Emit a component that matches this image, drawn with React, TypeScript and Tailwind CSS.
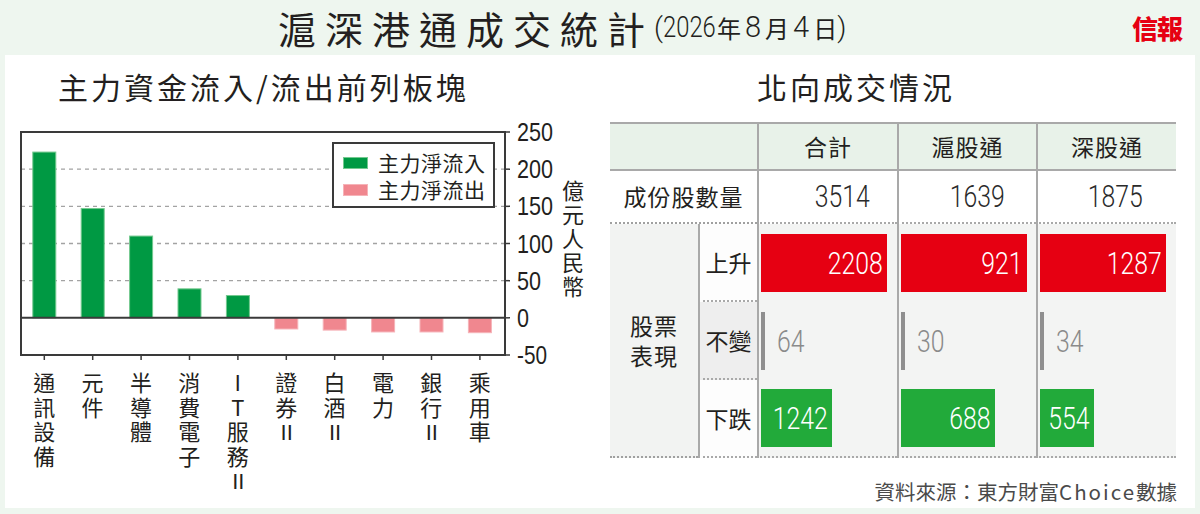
import React from 'react';

const CJK = "font-['Noto_Sans_CJK_TC',sans-serif]";
const LAT = "font-['Liberation_Sans',sans-serif]";
const NUM = "font-['Roboto','Liberation_Sans',sans-serif] font-light";

type Sector = { label: string[]; v: number };

// 'II' parts are set horizontally inside the vertical label
const sectors: Sector[] = [
  { label: ['通訊設備'], v: 223 },
  { label: ['元件'], v: 147 },
  { label: ['半導體'], v: 110 },
  { label: ['消費電子'], v: 39 },
  { label: ['IT服務', 'II'], v: 30 },
  { label: ['證券', 'II'], v: -15 },
  { label: ['白酒', 'II'], v: -16.5 },
  { label: ['電力'], v: -19 },
  { label: ['銀行', 'II'], v: -19 },
  { label: ['乘用車'], v: -20 },
];

// chart scale: 250 at y=12, -50 at y=235
const Y0 = 12;
const K = 223 / 300;
const yOf = (v: number) => Y0 + (250 - v) * K;
const cx = (i: number) => 24.3 + 48.4 * i;

const Chart: React.FC = () => (
  <svg width={541} height={250} className="block overflow-visible">
    {[200, 150, 100, 50].map((v) => (
      <line key={v} x1={1} x2={485} y1={yOf(v)} y2={yOf(v)} stroke="#a3a3a3" strokeWidth={1.3} strokeDasharray="4 4" />
    ))}
    {sectors.map((s, i) => {
      const h = Math.abs(s.v) * K;
      const pos = s.v > 0;
      return (
        <rect
          key={i}
          x={cx(i) - 11.5}
          y={pos ? yOf(s.v) : yOf(0)}
          width={23}
          height={h}
          fill={pos ? '#009943' : '#f0878f'}
          stroke={pos ? '#74c98f' : '#f6b3b8'}
          strokeWidth={1}
        />
      );
    })}
    <rect x={1} y={Y0} width={484} height={223} fill="none" stroke="#3a3a3a" strokeWidth={2} />
    <line x1={1} x2={485} y1={yOf(0)} y2={yOf(0)} stroke="#3a3a3a" strokeWidth={2} />
    {[250, 200, 150, 100, 50, 0, -50].map((v) => {
      const s = String(v);
      return (
        <g key={v}>
          <line x1={485} x2={490} y1={yOf(v)} y2={yOf(v)} stroke="#3a3a3a" strokeWidth={1.5} />
          <text
            x={497}
            y={yOf(v)}
            dominantBaseline="central"
            textLength={v < 0 ? 30 : s.length * 12}
            lengthAdjust="spacingAndGlyphs"
            className={`${LAT} fill-[#231f20] text-[25px]`}
          >
            {s}
          </text>
        </g>
      );
    })}
    {sectors.map((_, i) => (
      <line key={i} x1={cx(i)} x2={cx(i)} y1={235} y2={240} stroke="#3a3a3a" strokeWidth={1.5} />
    ))}
  </svg>
);

const Legend: React.FC = () => (
  <div className="absolute left-[312px] top-[22px] flex h-[66px] w-[163px] items-center gap-[10px] border-2 border-[#3a3a3a] bg-white pl-[9px] pt-[2px]">
    <div className="flex flex-col gap-[15px]">
      <span className="block h-[12px] w-[25px] border border-[#74c98f] bg-[#009943]" />
      <span className="block h-[12px] w-[25px] border border-[#f6b3b8] bg-[#f0878f]" />
    </div>
    <p className="text-[21px] leading-[27px] tracking-[0.5px] text-[#231f20]">
      主力淨流入
      <br />
      主力淨流出
    </p>
  </div>
);

// condensed light figures
const Num: React.FC<{ v: number; left?: boolean }> = ({ v, left }) => (
  <span className={`inline-block ${left ? 'origin-left' : 'origin-right'} scale-x-[0.8] ${NUM} text-[31px] leading-none`}>{v}</span>
);

type Col = { name: string; total: number; up: number; flat: number; down: number; pr: string };

const cols: Col[] = [
  { name: '合計', total: 3514, up: 2208, flat: 64, down: 1242, pr: 'pr-[27px]' },
  { name: '滬股通', total: 1639, up: 921, flat: 30, down: 688, pr: 'pr-[31px]' },
  { name: '深股通', total: 1875, up: 1287, flat: 34, down: 554, pr: 'pr-[33px]' },
];

const BAR = 126;

const Table: React.FC = () => (
  <div className="grid w-[566px] grid-cols-[88px_59px_140px_139px_140px] grid-rows-[49px_53px_78px_78px_78px] text-[#231f20]">
    <div className="col-span-2 border-y-2 border-[#a9a9a9] bg-[#e8f2e9]" />
    {cols.map((c) => (
      <div
        key={c.name}
        className="flex items-center justify-center border-y-2 border-l-2 border-[#a9a9a9] bg-[#e8f2e9] text-[23px] tracking-[1px]"
      >
        {c.name}
      </div>
    ))}

    <div className="col-span-2 flex items-center justify-center border-b-2 border-dotted border-[#a0a0a0] text-[23px] tracking-[1px]">
      成份股數量
    </div>
    {cols.map((c) => (
      <div
        key={c.name}
        className={`flex items-center justify-end border-b-2 border-l-2 border-[#a9a9a9] [border-bottom-style:dotted] ${c.pr} text-[#2a2a2a]`}
      >
        <Num v={c.total} />
      </div>
    ))}

    <div className="row-span-3 flex items-center justify-center border-b-2 border-dotted border-[#a0a0a0] bg-[#f2f3f2]">
      <p className="text-center text-[23px] leading-[30px] tracking-[1px]">
        股票
        <br />
        表現
      </p>
    </div>

    <div className="flex items-center justify-center border-b-2 border-l-2 border-[#a9a9a9] bg-[#fdfdfd] [border-bottom-style:dotted] text-[23px]">
      上升
    </div>
    {cols.map((c) => (
      <div key={c.name} className="flex items-center border-l-2 border-[#a9a9a9] bg-[#f3f4f3] pl-[2px]">
        <div className="flex h-[58px] items-center justify-end bg-[#e60012] pr-[4px] text-white" style={{ width: BAR }}>
          <Num v={c.up} />
        </div>
      </div>
    ))}

    <div className="flex items-center justify-center border-b-2 border-l-2 border-[#a9a9a9] bg-[#eeeeee] [border-bottom-style:dotted] text-[23px]">
      不變
    </div>
    {cols.map((c) => (
      <div key={c.name} className="flex items-center gap-[12px] border-l-2 border-[#a9a9a9] bg-[#f3f4f3] pl-[2px]">
        <div className="h-[58px] w-[4px] bg-[#8f8f8f]" />
        <span className="text-[#8a8a8a]">
          <Num v={c.flat} left />
        </span>
      </div>
    ))}

    <div className="flex items-center justify-center border-b-2 border-l-2 border-[#a9a9a9] bg-[#fdfdfd] [border-bottom-style:dotted] text-[23px]">
      下跌
    </div>
    {cols.map((c) => (
      <div
        key={c.name}
        className="flex items-center border-b-2 border-l-2 border-[#a9a9a9] bg-[#f3f4f3] pl-[2px] [border-bottom-style:dotted]"
      >
        <div
          className="flex h-[58px] items-center justify-end bg-[#22aa3a] pr-[4px] text-white"
          style={{ width: Math.round((c.down / c.up) * BAR) }}
        >
          <Num v={c.down} />
        </div>
      </div>
    ))}
  </div>
);

export default function App() {
  return (
    <div className={`flex h-[514px] w-[1200px] flex-col overflow-hidden bg-[#eef6ef] ${CJK} text-[#231f20]`}>
      <header className="flex h-[55px] shrink-0 items-center pl-[278px] pr-[18px]">
        <h1 className="text-[38px] font-normal leading-none tracking-[9px]">滬深港通成交統計</h1>
        <span className="flex items-center text-[24px] leading-none">
          <span className={`${NUM} text-[28px]`}>(</span>
          <span className={`inline-block w-[52px] origin-left scale-x-[0.82] ${NUM} text-[29px]`}>2026</span>
          <span className="ml-[2px]">年</span>
          <span className={`mx-[4px] ${NUM} text-[29px]`}>8</span>
          <span>月</span>
          <span className={`mx-[4px] ${NUM} text-[29px]`}>4</span>
          <span>日</span>
          <span className={`${NUM} text-[28px]`}>)</span>
        </span>
        <span className="ml-auto text-[26px] font-black leading-none tracking-[-1px] text-[#e60012]">信報</span>
      </header>

      <main className="mx-[5px] flex h-[453px] shrink-0 bg-white">
        <section className="flex w-[595px] flex-col">
          <h2 className="h-[51px] pl-[53px] pt-[11px] text-[30px] leading-[40px] tracking-[3px]">主力資金流入/流出前列板塊</h2>
          <div className="mt-[14px] flex pl-[15px]">
            <div className="relative">
              <Chart />
              <Legend />
            </div>
            <div className="mt-[60px] flex w-[24px] justify-center">
              <span className="text-[22px] leading-[24px] tracking-[2px] [writing-mode:vertical-rl]">億元人民幣</span>
            </div>
          </div>
          <div className="flex pl-[15px] pt-[2px]">
            {sectors.map((s, i) => (
              <div key={i} className="flex w-[48.4px] justify-center">
                <span className="text-[22px] leading-[24px] tracking-[2.5px] [text-orientation:upright] [writing-mode:vertical-rl]">
                  {s.label.map((part, j) =>
                    part === 'II' ? (
                      <span key={j} className={`${LAT} tracking-[3px] [text-combine-upright:all]`}>
                        {part}
                      </span>
                    ) : (
                      <span key={j}>{part}</span>
                    ),
                  )}
                </span>
              </div>
            ))}
          </div>
        </section>

        <section className="flex flex-1 flex-col pl-[10px]">
          <h2 className="h-[51px] pl-[147px] pt-[11px] text-[30px] leading-[40px] tracking-[3px]">北向成交情況</h2>
          <div className="mt-[16px]">
            <Table />
          </div>
          <p className="mt-[18px] pr-[18px] text-right text-[20.5px] leading-[30px] text-[#4a4a4a]">
            資料來源：東方財富<span className="tracking-[2px]">Choice</span>數據
          </p>
        </section>
      </main>
    </div>
  );
}
